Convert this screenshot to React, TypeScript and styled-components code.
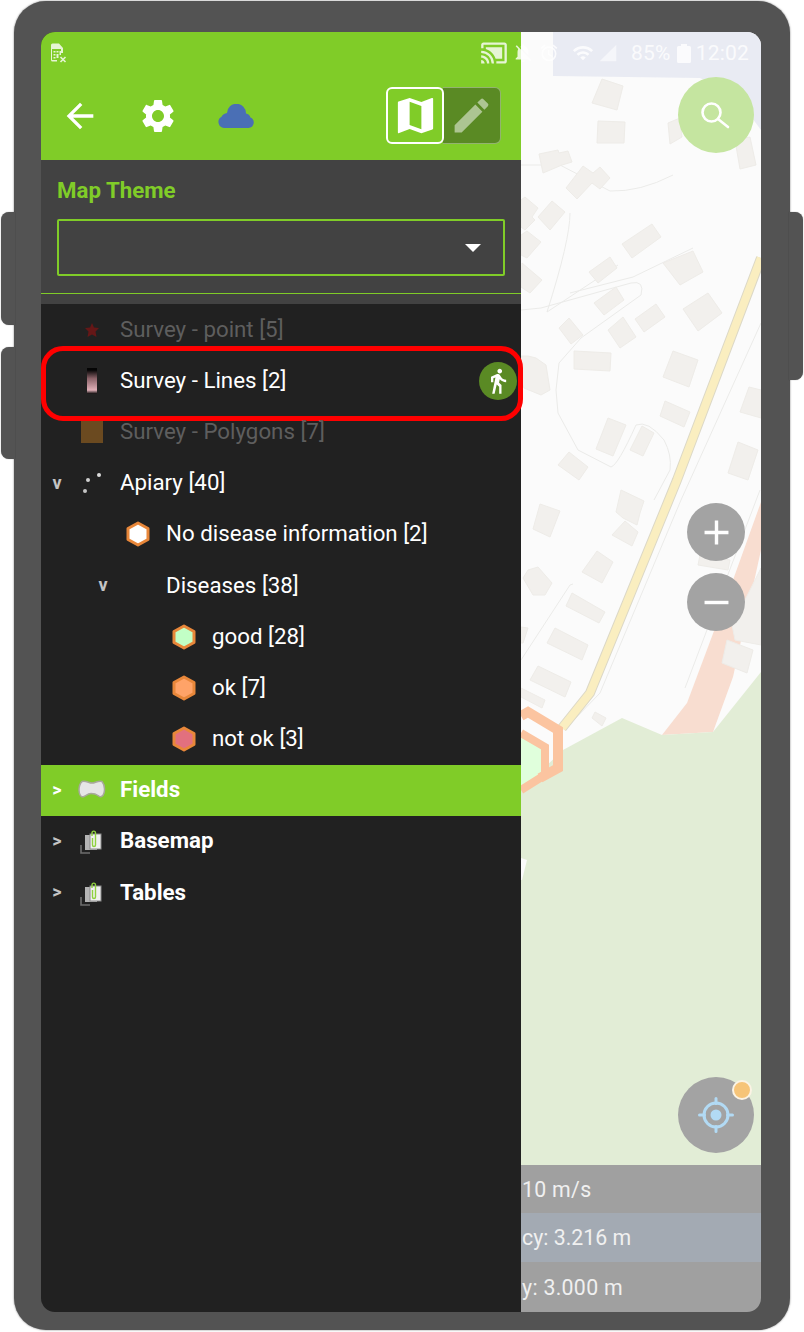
import React from 'react';
import styled, { createGlobalStyle } from 'styled-components';
import { MdAlarm, MdArrowBack, MdCastConnected, MdDirectionsWalk, MdEdit, MdMap, MdNotificationsOff, MdRemove, MdAdd, MdSettings, MdSignalCellular4Bar, MdWifi } from 'react-icons/md';

const GREEN = '#80cc28';
const DARK_GREEN = '#5a8a24';

const GlobalStyle = createGlobalStyle`
    html, body {
        margin: 0;
        padding: 0;
        background: #fff;
    }
    * {
        box-sizing: border-box;
    }
    body {
        font-family: Roboto, "Liberation Sans", sans-serif;
    }
`;

const Page = styled.div`
    width: 804px;
    height: 1332px;
    padding: 1px 14px 2px;
`;

const Device = styled.div`
    position: relative;
    height: 100%;
    padding: 31px 29px 18px 27px;
    background: #535353;
    border-radius: 32px;
    box-shadow: 0 0 2px rgba(0, 0, 0, 0.55);
`;

const SideButton = styled.div<{ $side: 'left' | 'right'; $top: number; $height: number }>`
    position: absolute;
    top: ${(p) => p.$top}px;
    ${(p) => p.$side}: -13px;
    width: 14px;
    height: ${(p) => p.$height}px;
    background: #535353;
    border-radius: ${(p) => (p.$side === 'left' ? '8px 0 0 8px' : '0 8px 8px 0')};
    box-shadow: 0 0 1px rgba(0, 0, 0, 0.5);
`;

const Screen = styled.div`
    position: relative;
    display: flex;
    height: 100%;
    overflow: hidden;
    border-radius: 14px;
`;

const StatusBar = styled.div`
    position: absolute;
    z-index: 3;
    top: 0;
    right: 0;
    left: 0;
    display: flex;
    height: 42px;
    align-items: center;
    padding: 0 12px 0 9px;
    color: rgba(255, 255, 255, 0.8);
`;

const StatusRight = styled.div`
    display: flex;
    align-items: center;
    margin-left: auto;
`;

const StatusText = styled.span<{ $ml: number }>`
    margin-left: ${(p) => p.$ml}px;
    font-size: 21px;
    letter-spacing: 0.2px;
`;

const StatusIconSlot = styled.span<{ $ml: number; $color?: string }>`
    display: flex;
    margin-left: ${(p) => p.$ml}px;
    color: ${(p) => p.$color ?? 'inherit'};
`;

const Drawer = styled.aside`
    position: relative;
    z-index: 2;
    display: flex;
    width: 480px;
    flex: none;
    flex-flow: column;
    background: #212121;
`;

const Header = styled.header`
    display: flex;
    height: 128px;
    flex: none;
    align-items: center;
    padding: 55px 20px 16px 0;
    background: ${GREEN};
`;

const ToolButton = styled.button`
    display: flex;
    width: 78px;
    height: 57px;
    align-items: center;
    justify-content: center;
    padding: 0;
    border: 0;
    background: none;
    color: #fff;
`;

const ModeToggle = styled.div`
    display: flex;
    margin-left: auto;
`;

const ModeButton = styled.button<{ $active?: boolean }>`
    display: flex;
    width: 58px;
    height: 57px;
    align-items: center;
    justify-content: center;
    padding: 0;
    border: ${(p) => (p.$active ? '2px solid #fff' : '1px solid rgba(255, 255, 255, 0.35)')};
    border-radius: 6px;
    background: ${(p) => (p.$active ? GREEN : DARK_GREEN)};
    color: ${(p) => (p.$active ? '#fff' : 'rgba(255, 255, 255, 0.5)')};
    ${(p) => (p.$active ? 'position: relative; z-index: 1;' : 'margin-left: -1px; border-left: 0; border-radius: 0 6px 6px 0;')}
`;

const ThemeSection = styled.section`
    flex: none;
    padding-top: 15px;
    background: #424242;
`;

const ThemeLabel = styled.div`
    padding: 0 16px;
    color: ${GREEN};
    font-size: 22.3px;
    font-weight: 700;
    line-height: 30px;
`;

const ThemeCombo = styled.div`
    display: flex;
    height: 57px;
    align-items: center;
    justify-content: flex-end;
    margin: 14px 16px 17px;
    padding-right: 22px;
    border: 2px solid ${GREEN};
    border-radius: 2px;
`;

const ComboArrow = styled.span`
    width: 0;
    height: 0;
    border-top: 8px solid #fff;
    border-right: 8px solid transparent;
    border-left: 8px solid transparent;
`;

const Divider = styled.div`
    height: 1px;
    margin-bottom: 10px;
    background: ${GREEN};
`;

const LayerList = styled.div`
    flex: 1;
`;

const Row = styled.div<{ $level: number; $selected?: boolean; $dim?: boolean; $group?: boolean }>`
    position: relative;
    display: grid;
    height: 51.2px;
    align-items: center;
    padding-left: ${(p) => p.$level * 46}px;
    background: ${(p) => (p.$selected ? GREEN : 'transparent')};
    color: ${(p) => (p.$dim ? '#5e5e5e' : '#fff')};
    font-size: 22.3px;
    font-weight: ${(p) => (p.$group ? 700 : 400)};
    grid-template-columns: 32px 38px 1fr;
`;

const RowLabel = styled.span`
    padding-bottom: 2px;
    padding-left: 9px;
`;

const Chevron = styled.span<{ $light?: boolean }>`
    padding-bottom: 2px;
    color: ${(p) => (p.$light ? '#fff' : '#c4c4c4')};
    font-size: 18px;
    font-weight: 700;
    text-align: center;
`;

const SymbolSlot = styled.span`
    display: flex;
    align-items: center;
    justify-content: center;
`;

const LineSwatch = styled.span`
    width: 10px;
    height: 26px;
    background: linear-gradient(#050505 8%, #8a6268 40%, #e0b0b8 85%, #050505);
`;

const FillSwatch = styled.span`
    width: 22px;
    height: 22px;
    background: #6b4a20;
`;

const Highlight = styled.div`
    position: absolute;
    top: -9px;
    right: -2px;
    bottom: -15px;
    left: 0;
    border: 5.5px solid #ff0000;
    border-radius: 22px;
    pointer-events: none;
`;

const TrackBadge = styled.span`
    position: absolute;
    top: 7px;
    right: 4px;
    display: flex;
    width: 38px;
    height: 38px;
    align-items: center;
    justify-content: center;
    border-radius: 50%;
    background: ${DARK_GREEN};
    color: #fff;
`;

const MapPane = styled.main`
    display: flex;
    min-width: 0;
    flex: 1;
    flex-flow: column;
`;

const MapCanvas = styled.div`
    position: relative;
    flex: 1;
    background: #fbfbfb;
`;

const MapDrawing = styled.svg`
    position: absolute;
    top: 0;
    left: 0;
    display: block;
`;

const RoundButton = styled.button<{ $top: number; $size: number; $bg: string }>`
    position: absolute;
    top: ${(p) => p.$top}px;
    left: ${(p) => 195 - p.$size / 2}px;
    display: flex;
    width: ${(p) => p.$size}px;
    height: ${(p) => p.$size}px;
    align-items: center;
    justify-content: center;
    padding: 0;
    border: 0;
    border-radius: 50%;
    background: ${(p) => p.$bg};
    color: #fff;
`;

const GpsDot = styled.span`
    position: absolute;
    top: 3px;
    right: 2px;
    width: 20px;
    height: 20px;
    border: 2px solid #fbf3e4;
    border-radius: 50%;
    background: #f6c478;
`;

const InfoRows = styled.div`
    flex: none;
    border-top: 1px solid #f4f4f4;
`;

const InfoRow = styled.div<{ $tint?: boolean; $height: number }>`
    display: flex;
    height: ${(p) => p.$height}px;
    align-items: center;
    overflow: hidden;
    background: ${(p) => (p.$tint ? '#a3aab3' : '#a0a0a0')};
    color: #f0f0f0;
    font-size: 21.3px;
    white-space: nowrap;
`;

const InfoText = styled.span<{ $spacing: number }>`
    margin-left: 1px;
    letter-spacing: ${(p) => p.$spacing}px;
`;

const Hexagon = ({ fill, stroke = '#e8873a' }: { fill: string; stroke?: string }) => (
    <svg width="24" height="26" viewBox="0 0 24 26">
        <polygon points="12,2 22,7.5 22,18.5 12,24 2,18.5 2,7.5" fill={fill} stroke={stroke} strokeWidth="3" strokeLinejoin="round" />
    </svg>
);

const PointSymbol = () => (
    <svg width="18" height="18" viewBox="0 0 18 18">
        <polygon points="9,2 11,6.500 16,7 12.500,10.500 13.500,16 9,13.500 4.500,16 5.500,10.500 2,7 7,6.500" fill="#651717" />
    </svg>
);

const DotsSymbol = () => (
    <svg width="26" height="24" viewBox="0 0 26 24">
        <circle cx="9" cy="9" r="2" fill="#cfcfcf" />
        <circle cx="20" cy="4" r="2" fill="#dcdcdc" />
        <circle cx="6" cy="20" r="2" fill="#c4c4c4" />
    </svg>
);

const FieldsSymbol = () => (
    <svg width="28" height="20" viewBox="0 0 28 20">
        <path
            d="M4 1.500C8 .5 11 3 14 3S20 .5 24 1.500C26 4 27 9 26 13C25 17 22 17.500 20 15.500C18 14 16 13.500 13 13.500S8 15.500 6 16.500C3 18 1 14 1 10C1 6 2 3.500 4 1.500Z"
            fill="#e6e6e6"
            stroke="#a8a89c"
            strokeWidth="1.5"
        />
    </svg>
);

const GroupSymbol = () => (
    <svg width="26" height="26" viewBox="0 0 26 26">
        <path d="M2 17v8h9" fill="none" stroke="#6e6e6e" strokeWidth="1.6" />
        <rect x="6" y="7" width="12" height="15" fill="#b4b4b4" />
        <rect x="11" y="6" width="11" height="15" fill="#f0f0f0" stroke="#8a8a8a" />
        <path d="M13 8V5c0-2.500 3.500-2.500 3.500 0V17c0 2-3 2-3 0V10" fill="none" stroke="#8fd13f" strokeWidth="1.4" />
    </svg>
);

const SimIcon = () => (
    <svg width="20" height="20" viewBox="0 0 20 20" fill="currentColor">
        <path d="M1 2a1.500 1.500 0 0 1 1.500-1.500H9L13 5v5h-2V6H2v11h5v1.500H2.500A1.500 1.500 0 0 1 1 17z" />
        <path d="M3.500 8h2v1.500h-2zM6.500 8h2v1.500h-2zM3.500 11h2v1.500h-2zM6.500 11h2v4h-2zM3.500 14h2v1.500h-2zM9.500 8h1.500v4H9.500z" />
        <path d="M10.500 14l5 5M15.500 14l-5 5" stroke="currentColor" strokeWidth="1.6" />
    </svg>
);

const BatteryIcon = () => (
    <svg width="14" height="19" viewBox="0 0 14 19" fill="currentColor">
        <path d="M4 0h6v2h2.500A1.500 1.500 0 0 1 14 3.500V17.500A1.500 1.500 0 0 1 12.500 19H1.500A1.500 1.500 0 0 1 0 17.500V3.500A1.500 1.500 0 0 1 1.500 2H4z" />
    </svg>
);

const CloudIcon = () => (
    <svg width="36" height="24" viewBox="0 0 36 24">
        <path
            d="M6 24A6 6 0 0 1 3.500 12.800A7 7 0 0 1 9 9A9.500 9.500 0 0 1 28 9.500A6 6 0 0 1 32.500 13.500A5.500 5.500 0 0 1 30.500 24Z"
            fill="#4a6fb5"
        />
    </svg>
);

const SearchIcon = () => (
    <svg width="40" height="40" viewBox="0 0 40 40" fill="none" stroke="#fff" strokeWidth="2.600">
        <circle cx="15.500" cy="17.500" r="9" />
        <path d="M22 24l10 8" strokeLinecap="round" />
    </svg>
);

const LocateIcon = () => (
    <svg width="40" height="40" viewBox="0 0 40 40" fill="none" stroke="#b2daf4">
        <circle cx="20" cy="20" r="12" strokeWidth="3" />
        <circle cx="20" cy="20" r="5.500" fill="#b2daf4" stroke="none" />
        <path d="M20 3.500v5M20 31.500v5M3.500 20h5M31.500 20h5" strokeWidth="3" strokeLinecap="round" />
    </svg>
);

const buildings = [
    '602,79 623,86 617,110 592,103',
    '598,121 625,122 624,143 597,143',
    '539,154 558,150 559,153 568,151 572,162 562,165 543,173',
    '583,166 593,173 600,167 610,178 600,189 592,183 577,199 566,188',
    '552,201 565,212 550,230 538,217',
    '525,197 538,208 532,217 535,220 525,230 521,227 521,200',
    '527,231 541,242 527,258 521,255 521,235',
    '522,263 542,280 530,293 521,287',
    '652,224 661,237 632,258 622,244',
    '610,257 617,268 598,283 589,272',
    '693,251 703,272 680,285 663,263',
    '735,140 750,137 756,165 740,169',
    '668,123 680,118 682,137 670,144',
    '616,287 624,300 604,315 594,303',
    '656,304 665,317 644,332 635,319',
    '623,317 636,337 620,348 608,330',
    '569,318 583,335 571,344 559,328',
    '574,351 611,353 610,371 574,369',
    '528,356 536,358 546,365 550,390 541,395 524,388 521,380 521,356',
    '673,351 698,360 689,387 663,377',
    '665,401 690,412 684,427 660,416',
    '608,418 626,425 613,456 596,449',
    '642,426 654,433 643,456 630,450',
    '569,452 588,467 579,480 558,465',
    '708,293 722,313 698,331 683,309',
    '749,387 761,390 761,418 740,412',
    '738,442 758,450 748,480 728,473',
    '621,490 644,501 640,513 637,525 623,518 616,512',
    '625,521 638,532 632,546 612,535',
    '540,504 560,511 550,537 533,529',
    '597,551 613,562 602,583 582,572',
    '538,567 552,583 545,595 533,595 523,578 528,570',
    '572,593 605,612 599,623 566,606',
    '555,628 588,645 582,660 547,643',
    '538,666 571,682 565,697 530,680',
    '521,688 545,700 542,708 521,697',
    '521,627 528,628 523,643 521,643',
    '595,712 606,718 602,726 592,718',
    '700,555 730,560 728,570 698,565',
    '761,568 761,645 735,640 732,625 750,590',
    '727,640 753,650 747,673 722,663',
];

const minorRoads = [
    'M521 165 L560 165 Q585 178 610 191 Q640 192 673 175',
    'M521 310 L541 308 L631 283 Q645 280 641 295 L581 338 L559 363 L556 390 L558 413 L578 450 L611 467 Q618 465 636 425 Q648 420 664 440 Q672 455 670 470 L654 500',
    'M570 213 Q570 240 547 312',
    'M618 265 L547 312',
    'M693 248 L633 277 L570 293',
    'M761 323 L681 500 L600 693 L570 724',
    'M760 490 L685 688',
    'M521 660 L570 585 L573 584',
];

const MapArtwork = () => (
    <MapDrawing width="240" height="1133" viewBox="521 32 240 1133">
        <polygon points="553,32 761,32 761,130 735,95 700,78 553,76" fill="#e9ebf3" />
        <polygon points="761,502 761,550 733,677 713,732 662,735 687,703 708,647 733,580" fill="#f8ddd0" />
        <polygon points="622,718 662,735 713,732 761,672 761,1165 521,1165 521,790 563,750" fill="#e2edd6" />
        <polygon points="521,858 527,860 522,880 521,880" fill="#fbfbfb" />
        {minorRoads.map((d) => (
            <path key={d} d={d} fill="none" stroke="#ebebe9" strokeWidth="1" />
        ))}
        {buildings.map((points) => (
            <polygon key={points} points={points} fill="#f2f0ed" stroke="#eeece8" strokeWidth="1" strokeLinejoin="round" />
        ))}
        <path d="M761 258 L677 480 L590 693 L562 728" fill="none" stroke="#dcd8c6" strokeWidth="10" />
        <path d="M761 258 L677 480 L590 693 L562 728" fill="none" stroke="#faeec0" strokeWidth="8" />
        <polygon points="521,736 545,749 545,772 521,786" fill="#e0ffdc" />
        <path d="M521 716 L528 712 L558 730 L558 768 L540 778" fill="none" stroke="#fbc4a0" strokeWidth="10" />
        <path d="M521 733 L545 747 L545 775 L521 790" fill="none" stroke="#fbc4a0" strokeWidth="8" />
    </MapDrawing>
);

export default function App() {
    return (
        <>
            <GlobalStyle />
            <Page>
                <Device>
                    <SideButton $side="left" $top={211} $height={113} />
                    <SideButton $side="left" $top={346} $height={112} />
                    <SideButton $side="right" $top={211} $height={168} />
                    <Screen>
                        <StatusBar>
                            <StatusIconSlot $ml={0}>
                                <SimIcon />
                            </StatusIconSlot>
                            <StatusRight>
                                <StatusIconSlot $ml={0}>
                                    <MdCastConnected size={28} />
                                </StatusIconSlot>
                                <StatusIconSlot $ml={4}>
                                    <MdNotificationsOff size={22} />
                                </StatusIconSlot>
                                <StatusIconSlot $ml={5}>
                                    <MdAlarm size={20} />
                                </StatusIconSlot>
                                <StatusIconSlot $ml={13}>
                                    <MdWifi size={22} />
                                </StatusIconSlot>
                                <StatusIconSlot $ml={4} $color="rgba(255, 255, 255, 0.55)">
                                    <MdSignalCellular4Bar size={20} />
                                </StatusIconSlot>
                                <StatusText $ml={13}>85%</StatusText>
                                <StatusIconSlot $ml={6}>
                                    <BatteryIcon />
                                </StatusIconSlot>
                                <StatusText $ml={5}>12:02</StatusText>
                            </StatusRight>
                        </StatusBar>

                        <Drawer>
                            <Header>
                                <ToolButton>
                                    <MdArrowBack size={40} />
                                </ToolButton>
                                <ToolButton>
                                    <MdSettings size={40} />
                                </ToolButton>
                                <ToolButton>
                                    <CloudIcon />
                                </ToolButton>
                                <ModeToggle>
                                    <ModeButton $active>
                                        <MdMap size={47} />
                                    </ModeButton>
                                    <ModeButton>
                                        <MdEdit size={45} />
                                    </ModeButton>
                                </ModeToggle>
                            </Header>

                            <ThemeSection>
                                <ThemeLabel>Map Theme</ThemeLabel>
                                <ThemeCombo>
                                    <ComboArrow />
                                </ThemeCombo>
                                <Divider />
                            </ThemeSection>

                            <LayerList>
                                <Row $level={0} $dim>
                                    <span />
                                    <SymbolSlot>
                                        <PointSymbol />
                                    </SymbolSlot>
                                    <RowLabel>Survey - point [5]</RowLabel>
                                </Row>
                                <Row $level={0}>
                                    <span />
                                    <SymbolSlot>
                                        <LineSwatch />
                                    </SymbolSlot>
                                    <RowLabel>Survey - Lines [2]</RowLabel>
                                    <TrackBadge>
                                        <MdDirectionsWalk size={28} />
                                    </TrackBadge>
                                    <Highlight />
                                </Row>
                                <Row $level={0} $dim>
                                    <span />
                                    <SymbolSlot>
                                        <FillSwatch />
                                    </SymbolSlot>
                                    <RowLabel>Survey - Polygons [7]</RowLabel>
                                </Row>
                                <Row $level={0}>
                                    <Chevron>v</Chevron>
                                    <SymbolSlot>
                                        <DotsSymbol />
                                    </SymbolSlot>
                                    <RowLabel>Apiary [40]</RowLabel>
                                </Row>
                                <Row $level={1}>
                                    <span />
                                    <SymbolSlot>
                                        <Hexagon fill="#ffffff" />
                                    </SymbolSlot>
                                    <RowLabel>No disease information [2]</RowLabel>
                                </Row>
                                <Row $level={1}>
                                    <Chevron>v</Chevron>
                                    <span />
                                    <RowLabel>Diseases [38]</RowLabel>
                                </Row>
                                <Row $level={2}>
                                    <span />
                                    <SymbolSlot>
                                        <Hexagon fill="#c2ffc6" />
                                    </SymbolSlot>
                                    <RowLabel>good [28]</RowLabel>
                                </Row>
                                <Row $level={2}>
                                    <span />
                                    <SymbolSlot>
                                        <Hexagon fill="#ffa368" />
                                    </SymbolSlot>
                                    <RowLabel>ok [7]</RowLabel>
                                </Row>
                                <Row $level={2}>
                                    <span />
                                    <SymbolSlot>
                                        <Hexagon fill="#e2707e" />
                                    </SymbolSlot>
                                    <RowLabel>not ok [3]</RowLabel>
                                </Row>
                                <Row $level={0} $selected $group>
                                    <Chevron $light>&gt;</Chevron>
                                    <SymbolSlot>
                                        <FieldsSymbol />
                                    </SymbolSlot>
                                    <RowLabel>Fields</RowLabel>
                                </Row>
                                <Row $level={0} $group>
                                    <Chevron>&gt;</Chevron>
                                    <SymbolSlot>
                                        <GroupSymbol />
                                    </SymbolSlot>
                                    <RowLabel>Basemap</RowLabel>
                                </Row>
                                <Row $level={0} $group>
                                    <Chevron>&gt;</Chevron>
                                    <SymbolSlot>
                                        <GroupSymbol />
                                    </SymbolSlot>
                                    <RowLabel>Tables</RowLabel>
                                </Row>
                            </LayerList>
                        </Drawer>

                        <MapPane>
                            <MapCanvas>
                                <MapArtwork />
                                <RoundButton $top={45} $size={76} $bg="#c5e5a0">
                                    <SearchIcon />
                                </RoundButton>
                                <RoundButton $top={471} $size={58} $bg="#a3a3a3">
                                    <MdAdd size={41} />
                                </RoundButton>
                                <RoundButton $top={541} $size={58} $bg="#a3a3a3">
                                    <MdRemove size={41} />
                                </RoundButton>
                                <RoundButton $top={1045} $size={76} $bg="#a3a3a3">
                                    <LocateIcon />
                                    <GpsDot />
                                </RoundButton>
                            </MapCanvas>
                            <InfoRows>
                                <InfoRow $height={48}>
                                    <InfoText $spacing={0.3}>10 m/s</InfoText>
                                </InfoRow>
                                <InfoRow $tint $height={49}>
                                    <InfoText $spacing={0}>cy: 3.216 m</InfoText>
                                </InfoRow>
                                <InfoRow $height={50}>
                                    <InfoText $spacing={0.3}>y: 3.000 m</InfoText>
                                </InfoRow>
                            </InfoRows>
                        </MapPane>
                    </Screen>
                </Device>
            </Page>
        </>
    );
}
